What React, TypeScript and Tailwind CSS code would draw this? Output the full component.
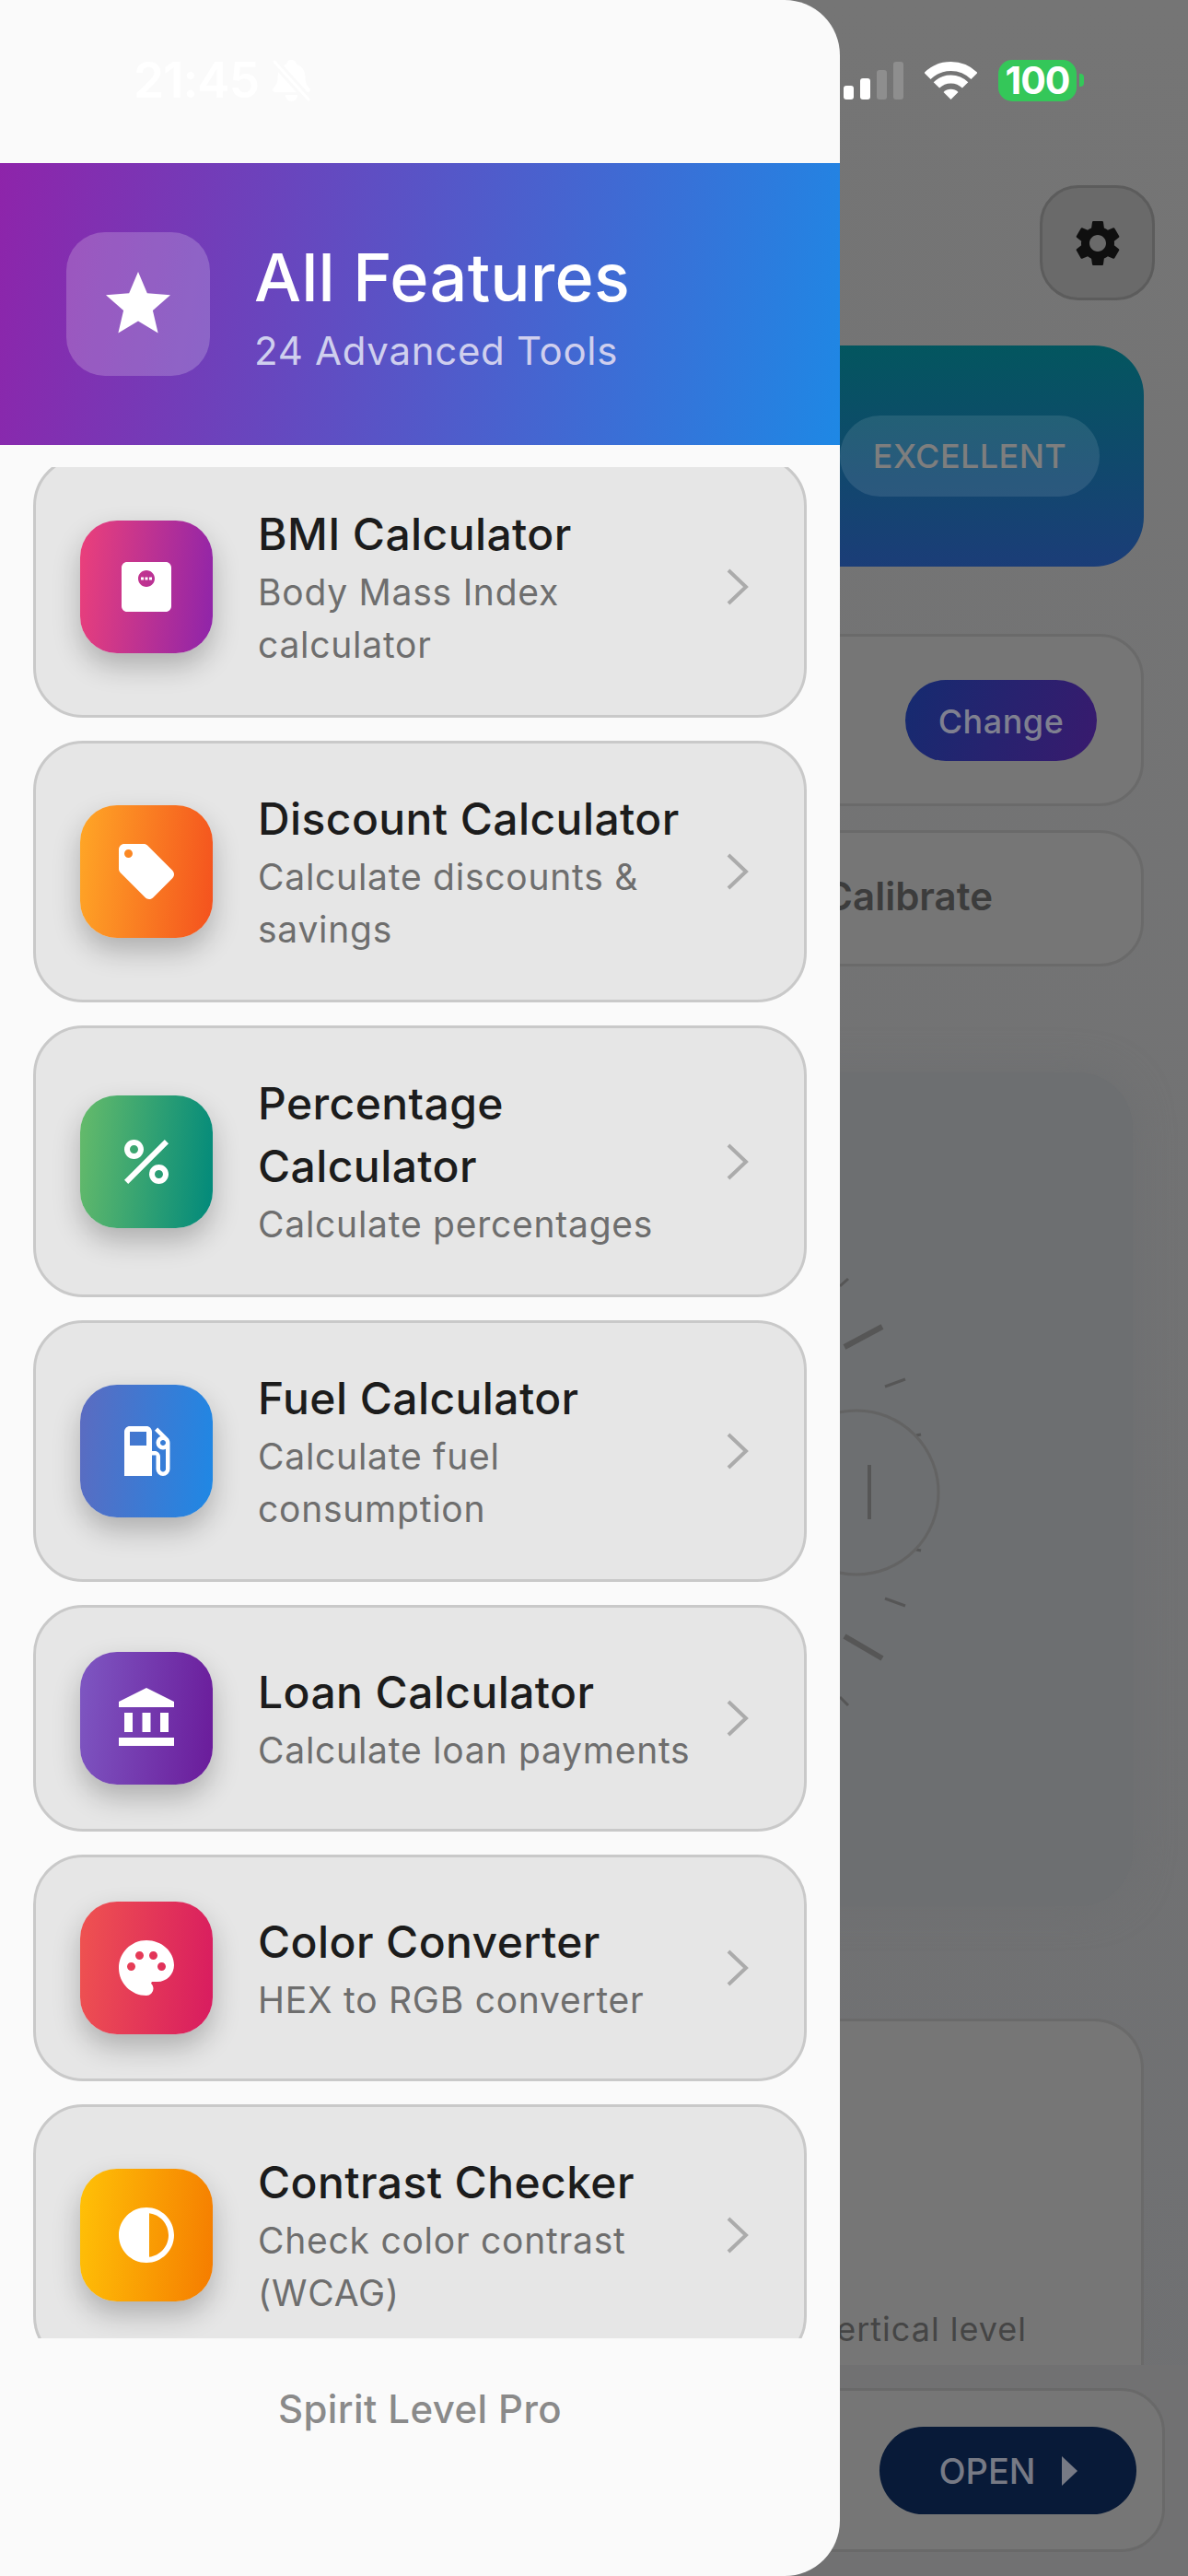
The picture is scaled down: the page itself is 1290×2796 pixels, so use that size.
/**
 * Spirit Level Pro - features drawer open over the dimmed level screen
 */
import React from 'react';
import {
  MdStar,
  MdSettings,
  MdMonitorWeight,
  MdLocalOffer,
  MdPercent,
  MdLocalGasStation,
  MdAccountBalance,
  MdPalette,
  MdContrast,
} from 'react-icons/md';

const tools = [
  { title: 'BMI Calculator', sub: 'Body Mass Index calculator', Icon: MdMonitorWeight, bg: 'bg-[linear-gradient(96deg,#ec407a,#8e24aa)]' },
  { title: 'Discount Calculator', sub: 'Calculate discounts & savings', Icon: MdLocalOffer, bg: 'bg-[linear-gradient(96deg,#ffa726,#f4511e)]' },
  { title: 'Percentage Calculator', sub: 'Calculate percentages', Icon: MdPercent, bg: 'bg-[linear-gradient(96deg,#66bb6a,#00897b)]' },
  { title: 'Fuel Calculator', sub: 'Calculate fuel consumption', Icon: MdLocalGasStation, bg: 'bg-[linear-gradient(96deg,#5c6bc0,#1e88e5)]' },
  { title: 'Loan Calculator', sub: 'Calculate loan payments', Icon: MdAccountBalance, bg: 'bg-[linear-gradient(96deg,#7e57c2,#6a1b9a)]' },
  { title: 'Color Converter', sub: 'HEX to RGB converter', Icon: MdPalette, bg: 'bg-[linear-gradient(96deg,#ef5350,#d81b60)]' },
  { title: 'Contrast Checker', sub: 'Check color contrast (WCAG)', Icon: MdContrast, bg: 'bg-[linear-gradient(96deg,#ffc107,#f57c00)]' },
];

function ToolCard({ title, sub, Icon, bg }: (typeof tools)[number]) {
  return (
    <div className="flex shrink-0 items-center rounded-[54px] border-[3px] border-[#c9c9c9] bg-[#e6e6e6] py-[48px] pl-[48px] pr-[48px]">
      <div className={`flex h-[144px] w-[144px] shrink-0 items-center justify-center rounded-[40px] shadow-[0_14px_30px_rgba(0,0,0,0.24)] ${bg}`}>
        <Icon size={72} color="#ffffff" />
      </div>
      <div className="ml-[49px] min-w-0 flex-1">
        <div className="text-[48px] font-medium leading-[68px] tracking-[0.4px] text-[#1c1c1c]">{title}</div>
        <div className="text-[39px] leading-[57px] tracking-[0.75px] text-[#6e6e6e]">{sub}</div>
      </div>
      <svg viewBox="0 0 24 40" className="ml-[24px] mr-[12px] h-[40px] w-[24px] shrink-0" fill="none" stroke="#ababab" strokeWidth="4">
        <path d="M2 2l19 18L2 38" />
      </svg>
    </div>
  );
}

function Drawer() {
  return (
    <div className="absolute inset-y-0 left-0 flex w-[912px] flex-col overflow-hidden rounded-r-[60px] bg-[#fafafa]">
      <div className="h-[177px] shrink-0" />
      <div className="flex h-[306px] shrink-0 items-center bg-[linear-gradient(100deg,#8e24aa,#1e88e5)] pl-[72px]">
        <div className="flex h-[156px] w-[156px] items-center justify-center rounded-[42px] bg-white/20">
          <MdStar size={84} color="#ffffff" />
        </div>
        <div className="ml-[48px] pt-[5px]">
          <div className="text-[72px] font-medium leading-[86px] tracking-[0.2px] text-white">All Features</div>
          <div className="mt-[10px] text-[42px] leading-[54px] tracking-[0.7px] text-[#cfcfee]">24 Advanced Tools</div>
        </div>
      </div>
      <div className="mt-[24px] min-h-0 flex-1 overflow-hidden px-[36px]">
        <div className="mt-[-12px] flex flex-col gap-[25px]">
          {tools.map((t) => (
            <ToolCard key={t.title} {...t} />
          ))}
        </div>
      </div>
      <div className="flex h-[258px] shrink-0 justify-center pt-[52px] text-[42px] font-medium leading-[50px] tracking-[0.4px] text-[#8a8a8a]">
        Spirit Level Pro
      </div>
    </div>
  );
}

function StatusBar() {
  return (
    <div className="absolute left-0 right-0 top-[62px] flex h-[50px] items-center pl-[145px] pr-[113px] text-white">
      <span className="text-[53px] font-semibold leading-[50px] tracking-[-1px]">21:45</span>
      <svg viewBox="0 0 41 45" className="ml-[15px] h-[45px] w-[41px]">
        <path fill="#ffffff" d="M20.5 0c-3 0-5.500 2-6 5C8.500 7 5.500 13 5.500 19c0 6-2.500 10-5.500 13 0 2 1 3 3 3h35c2 0 3-1 3-3-3-3-5.500-7-5.500-13 0-6-3-12-9-14-.5-3-3-5-6-5z" />
        <path fill="#ffffff" d="M14 38h13c0 4-3 7-6.500 7S14 42 14 38z" />
        <path stroke="#fafafa" strokeWidth="9" d="M2 2l37 41" />
        <path stroke="#ffffff" strokeWidth="3" strokeLinecap="round" d="M2 2l37 41" />
      </svg>
      <div className="ml-auto flex items-center">
        <div className="flex h-[41px] items-end gap-[7px]">
          <div className="h-[15px] w-[11px] rounded-[3px] bg-white" />
          <div className="h-[23px] w-[11px] rounded-[3px] bg-white" />
          <div className="h-[32px] w-[11px] rounded-[3px] bg-[#8e8e8e]" />
          <div className="h-[41px] w-[11px] rounded-[3px] bg-[#8e8e8e]" />
        </div>
        <svg viewBox="0 0 57 42" className="ml-[23px] h-[42px] w-[57px]" fill="none" stroke="#ffffff">
          <path strokeWidth="10" d="M3 16.500a36 36 0 0 1 51 0" />
          <path strokeWidth="9" d="M12.900 26.400a22 22 0 0 1 31.200 0" />
          <path fill="#ffffff" stroke="none" d="M28.500 42l-8-8a11.300 11.300 0 0 1 16 0z" />
        </svg>
        <div className="ml-[23px] flex h-[45px] w-[85px] items-center justify-center rounded-[15px] bg-[#34c759] text-[41px] font-bold leading-none tracking-[-1px]">100</div>
        <div className="ml-[3px] h-[14px] w-[5px] rounded-r-[4px] bg-[#34c759]" />
      </div>
    </div>
  );
}

function LevelScreen() {
  return (
    <div className="flex h-[2796px] w-[1290px] flex-col bg-[linear-gradient(180deg,#757575,#6f7072)]">
      <div className="flex justify-end pr-[36px] pt-[201px]">
        <div className="flex h-[125px] w-[125px] items-center justify-center rounded-[42px] border-[3px] border-[#5c5c5c] bg-[#6a6a6a]">
          <MdSettings size={60} color="#0f0f0f" />
        </div>
      </div>
      <div className="ml-[48px] mr-[48px] mt-[49px] flex h-[240px] items-center justify-end rounded-[54px] bg-[linear-gradient(180deg,#03565f,#1b3d78)] pr-[48px]">
        <div className="flex h-[88px] w-[282px] items-center justify-center rounded-full bg-white/10 text-[36px] font-medium tracking-[0.4px] text-[#7e7e7e]">EXCELLENT</div>
      </div>
      <div className="ml-[48px] mr-[48px] mt-[73px] flex h-[187px] items-center justify-end rounded-[48px] border-[3px] border-[#6a6a6a] bg-[#767676] pr-[48px]">
        <div className="flex h-[88px] w-[208px] items-center justify-center rounded-full bg-[linear-gradient(110deg,#152b70,#391a6e)] pt-[2px] text-[36px] font-medium tracking-[0.5px] text-[#7f8090]">Change</div>
      </div>
      <div className="ml-[48px] mr-[48px] mt-[26px] flex h-[148px] items-center justify-end rounded-[48px] border-[3px] border-[#6a6a6a] bg-[#767676] pb-[6px] pr-[161px]">
        <span className="text-[42px] font-semibold text-[#3c3c3c]">Calibrate</span>
      </div>
      <div className="ml-[48px] mr-[60px] mt-[115px] h-[905px] shrink-0 rounded-[60px] bg-[#6d6f71] shadow-[0_0_40px_#6d6f71]">
        <svg viewBox="48 1164 1182 905" className="h-full w-full" fill="none" stroke="#565656">
          <g strokeWidth="6">
            <path d="M917 1462l41-22" />
            <path d="M917 1776l41 24" />
          </g>
          <g strokeWidth="3">
            <path d="M912 1396l9-8" />
            <path d="M912 1842l9 9" />
            <path d="M961 1505l22-8" />
            <path d="M961 1735l22 8" />
            <path d="M995 1558l5-1" />
            <path d="M995 1682l5 1" />
            <path d="M944 1590v59" strokeWidth="4" />
          </g>
          <circle cx="930" cy="1620" r="89" stroke="#636363" strokeWidth="3" />
        </svg>
      </div>
      <div className="ml-[48px] mr-[48px] mt-[122px] flex h-[376px] shrink-0 items-end justify-end overflow-hidden rounded-t-[54px] border-x-[3px] border-t-[3px] border-[#6a6a6a] bg-[#767676] pb-[17px] pr-[124px]">
        <span className="text-[36px] leading-[44px] tracking-[1px] text-[#454545]">Check vertical level</span>
      </div>
      <div className="flex-1 bg-[#717172] pl-[48px] pr-[25px] pt-[25px]">
        <div className="flex h-[178px] items-center justify-end rounded-[48px] border-[3px] border-[#696969] bg-[#767676] pr-[28px]">
          <div className="flex h-[95px] w-[279px] items-center justify-center rounded-full bg-[#081a38] pt-[2px] text-[38px] font-medium text-[#777a85]">
            OPEN
            <svg viewBox="0 0 17 32" className="ml-[28px] h-[32px] w-[17px]" fill="#777a85">
              <path d="M0 0l17 16L0 32z" />
            </svg>
          </div>
        </div>
      </div>
    </div>
  );
}

export default function App() {
  return (
    <div className="relative h-[2796px] w-[1290px] overflow-hidden font-['Inter',sans-serif]">
      <LevelScreen />
      <Drawer />
      <StatusBar />
    </div>
  );
}
